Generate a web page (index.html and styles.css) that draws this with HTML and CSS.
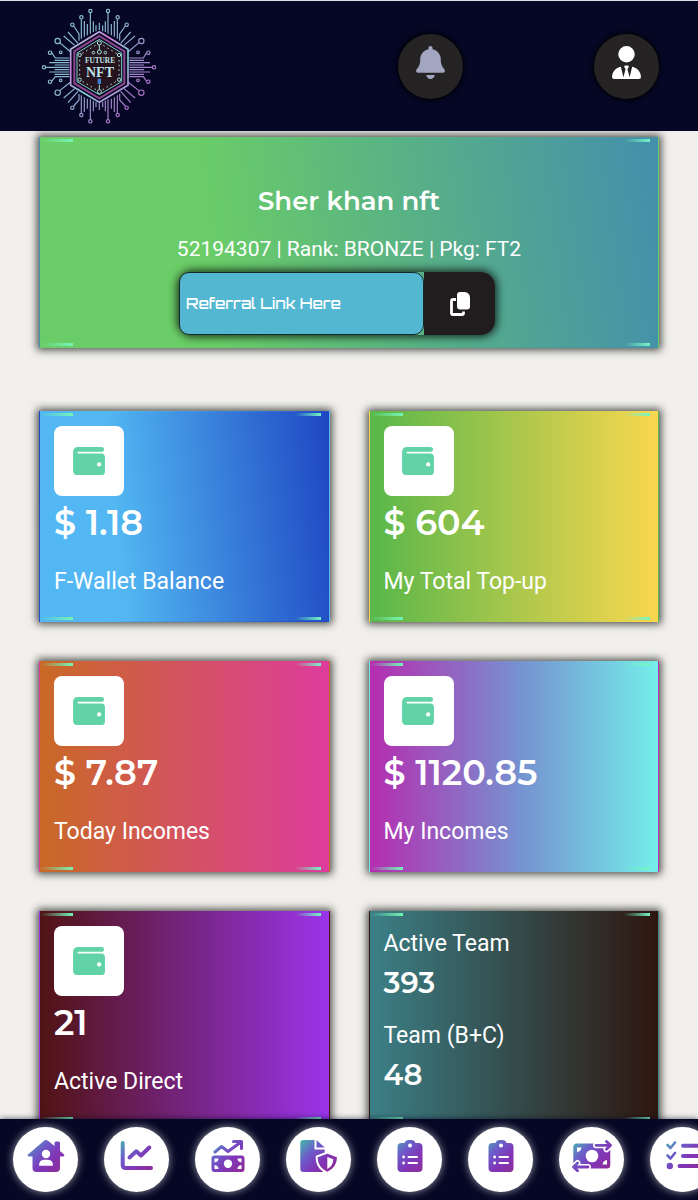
FILE: index.html
```
<!DOCTYPE html>
<html lang="en">
<head>
    <meta charset="UTF-8">
    <meta name="viewport" content="width=device-width, initial-scale=1.0">
    <title>Future NFT - Dashboard</title>
    <link rel="stylesheet" href="styles.css">
</head>
<body>
    <!-- Shared icon shapes -->
    <svg class="defs" width="0" height="0" aria-hidden="true">
        <defs>
            <linearGradient id="navGrad" gradientUnits="userSpaceOnUse" x1="2" y1="0" x2="34" y2="32">
                <stop offset="0" stop-color="#45b8b0"/>
                <stop offset="0.35" stop-color="#6d5bc8"/>
                <stop offset="0.65" stop-color="#8036b8"/>
                <stop offset="1" stop-color="#8f2c96"/>
            </linearGradient>
            <linearGradient id="logoGrad" gradientUnits="userSpaceOnUse" x1="60" y1="80" x2="350" y2="330">
                <stop offset="0" stop-color="#86c4d2"/>
                <stop offset="0.5" stop-color="#8fb0d0"/>
                <stop offset="1" stop-color="#b45cc4"/>
            </linearGradient>
            <linearGradient id="hexGrad" gradientUnits="userSpaceOnUse" x1="120" y1="100" x2="300" y2="310">
                <stop offset="0" stop-color="#8feae0"/>
                <stop offset="0.3" stop-color="#d67be0"/>
                <stop offset="0.6" stop-color="#7fd0d8"/>
                <stop offset="1" stop-color="#d06fe0"/>
            </linearGradient>
            <symbol id="wallet" viewBox="0 0 34 30">
                <path d="M5 0h24q3 0 3 2.500t-3 2.500H5.500q-1 0-1 .8t1 .8H29q4 0 4 4V25q0 4-4 4H5q-4.500 0-5-4V5q.3-5 5-5z"/>
                <circle cx="27" cy="18" r="2.200" fill="#fff"/>
            </symbol>
            <symbol id="clipboard" viewBox="0 0 40 32">
                <path d="M11.500 3h3q1-3 4-3h3q3 0 4 3h3q4 0 4 4v21q0 4-4 4h-17q-4 0-4-4V7q0-4 4-4z"/>
                <g fill="#fff">
                    <circle cx="20" cy="5.500" r="2"/>
                    <circle cx="13.600" cy="17" r="1.400"/>
                    <circle cx="13.600" cy="23" r="1.400"/>
                    <rect x="17.500" y="16" width="10.500" height="2" rx="1"/>
                    <rect x="17.500" y="22" width="10.500" height="2" rx="1"/>
                </g>
            </symbol>
        </defs>
    </svg>

    <header class="topbar">
        <a class="logo" href="#" aria-label="Future NFT">
            <svg viewBox="27 20 360 360" width="120" height="120">
                <g fill="none" stroke="url(#logoGrad)" stroke-width="3.500">
                    <!-- top and bottom traces -->
                    <path d="M181 41V103M154 60V118M234 41V103M262 60V118M163 65V112M172 74V108M190 66V98M198 78V96M208 70V92M218 78V96M226 66V98M244 74V108M253 65V112"/>
                    <path d="M181 360V300M154 341V288M234 360V300M262 341V288M163 338V294M172 328V298M190 336V304M198 324V308M208 332V312M218 324V308M226 336V304M244 328V298M253 338V294"/>
                    <!-- left and right traces -->
                    <path d="M48 204H118M65 160L76 176H118M65 246L76 232H118M58 190H118M58 218H118M74 183H118M74 197H118M74 211H118M74 225H118"/>
                    <path d="M367 204H298M350 160L340 176H298M350 246L340 232H298M360 190H298M360 218H298M342 183H298M342 197H298M342 211H298M342 225H298"/>
                    <!-- diagonal traces -->
                    <path d="M131 80L147 104V124M101 110L134 138M114 98L144 132M89 130L122 158M286 80L269 104V124M315 110L282 138M302 98L272 132M327 130L294 158"/>
                    <path d="M131 320L147 302V284M101 296L134 268M114 310L144 276M89 274L122 248M286 320L269 302V284M315 296L282 268M302 310L272 276M327 274L294 248"/>
                    <g>
                        <circle cx="181" cy="35" r="5"/><circle cx="234" cy="35" r="5"/>
                        <circle cx="154" cy="54" r="5"/><circle cx="263" cy="54" r="5"/>
                        <circle cx="127" cy="76" r="5"/><circle cx="290" cy="76" r="5"/>
                        <circle cx="83" cy="125" r="8"/><circle cx="334" cy="125" r="8"/>
                        <circle cx="60" cy="160" r="5"/><circle cx="355" cy="160" r="5"/>
                        <circle cx="92" cy="159" r="4"/><circle cx="324" cy="159" r="4"/>
                        <circle cx="42" cy="204" r="5"/><circle cx="372" cy="204" r="5"/>
                        <circle cx="60" cy="247" r="5"/><circle cx="355" cy="247" r="5"/>
                        <circle cx="92" cy="243" r="4"/><circle cx="324" cy="243" r="4"/>
                        <circle cx="83" cy="280" r="8"/><circle cx="334" cy="280" r="8"/>
                        <circle cx="127" cy="325" r="5"/><circle cx="290" cy="325" r="5"/>
                        <circle cx="154" cy="347" r="5"/><circle cx="263" cy="347" r="5"/>
                        <circle cx="181" cy="366" r="5"/><circle cx="234" cy="366" r="5"/>
                    </g>
                </g>
                <path d="M208 97L294 150V258L208 309L122 258V150Z" fill="#0b0a1c" stroke="url(#hexGrad)" stroke-width="5"/>
                <path d="M208 110L283 156V252L208 297L133 252V156Z" fill="none" stroke="#8d4696" stroke-width="6"/>
                <path d="M208 120L275 161V247L208 286L141 247V161Z" fill="#25131d" stroke="#78cfd0" stroke-width="3"/>
                <path d="M208 131L267 167V241L208 277L149 241V167Z" fill="none" stroke="#9fdce0" stroke-width="3" stroke-dasharray="5 9"/>
                <g fill="#25131d" stroke="#a5e2e4" stroke-width="3">
                    <circle cx="208" cy="131" r="6"/><circle cx="149" cy="167" r="5"/><circle cx="267" cy="167" r="5"/>
                    <circle cx="149" cy="241" r="5"/><circle cx="267" cy="241" r="5"/><circle cx="208" cy="277" r="6"/>
                    <circle cx="208" cy="158" r="6"/><circle cx="190" cy="160" r="4"/><circle cx="226" cy="160" r="4"/>
                </g>
                <path d="M208 137V152M208 256V270" stroke="#a5e2e4" stroke-width="3"/>
                <path d="M203 238h10v16h-10z" fill="#3d7fd0"/>
                <text class="logo-text" x="210" y="192" font-size="22" text-anchor="middle">FUTURE</text>
                <text class="logo-text" x="210" y="233" font-size="42" text-anchor="middle">NFT</text>
            </svg>
        </a>
        <div class="topbar-actions">
            <button class="round-btn" type="button" aria-label="Notifications">
                <svg viewBox="0 0 448 512" width="29" height="33" fill="#a3a6c0"><path d="M224 0c-17.700 0-32 14.300-32 32V51.200C119 66 64 130.600 64 208v18.800c0 47-17.300 92.400-48.500 127.600l-7.400 8.300c-8.400 9.400-10.400 22.900-5.300 34.400S19.400 416 32 416H416c12.600 0 24-7.400 29.200-18.900s3.100-25-5.300-34.400l-7.400-8.300C401.300 319.200 384 273.900 384 226.800V208c0-77.400-55-142-128-156.800V32c0-17.700-14.300-32-32-32zm45.300 493.300c12-12 18.700-28.300 18.700-45.300H160c0 17 6.700 33.300 18.700 45.300s28.300 18.700 45.300 18.700s33.300-6.700 45.300-18.700z"/></svg>
            </button>
            <button class="round-btn" type="button" aria-label="Profile">
                <svg viewBox="0 0 448 512" width="29" height="33" fill="#fff"><path d="M224 256A128 128 0 1 0 224 0a128 128 0 1 0 0 256zM209.100 359.200l-18.600-31c-6.400-10.700 1.300-24.200 13.700-24.200H243.700c12.400 0 20.100 13.600 13.700 24.200l-18.600 31 33.400 123.900 39.500-161.200c77.200 12 136.300 78.800 136.300 159.400c0 17-13.800 30.700-30.700 30.700H30.700C13.800 512 0 498.200 0 481.300c0-80.600 59.100-147.400 136.300-159.400l39.500 161.200 33.400-123.900z"/></svg>
            </button>
        </div>
    </header>

    <main class="content">
        <section class="card profile">
            <h1>Sher khan nft</h1>
            <p>52194307 | Rank: BRONZE | Pkg: FT2</p>
            <div class="referral">
                <input type="text" placeholder="Referral Link Here" aria-label="Referral link" readonly>
                <button type="button" aria-label="Copy referral link">
                    <svg viewBox="0 0 20 24" width="20" height="24">
                        <path d="M6 7.500H3Q1.500 7.500 1.500 9V21Q1.500 22.500 3 22.500H12Q13.500 22.500 13.500 21V19.500" fill="none" stroke="#fff" stroke-width="2.800"/>
                        <path d="M10 0h5q5 1 5 6v8.500q0 3-3 3h-7q-3 0-3-3V3q0-3 3-3z" fill="#fff"/>
                    </svg>
                </button>
            </div>
        </section>

        <div class="cards">
            <section class="card blue">
                <span class="card-icon"><svg width="33" height="29"><use href="#wallet"/></svg></span>
                <h2>$ 1.18</h2>
                <p>F-Wallet Balance</p>
            </section>
            <section class="card lime">
                <span class="card-icon"><svg width="33" height="29"><use href="#wallet"/></svg></span>
                <h2>$ 604</h2>
                <p>My Total Top-up</p>
            </section>
            <section class="card orange">
                <span class="card-icon"><svg width="33" height="29"><use href="#wallet"/></svg></span>
                <h2>$ 7.87</h2>
                <p>Today Incomes</p>
            </section>
            <section class="card aqua">
                <span class="card-icon"><svg width="33" height="29"><use href="#wallet"/></svg></span>
                <h2>$ 1120.85</h2>
                <p>My Incomes</p>
            </section>
            <section class="card violet">
                <span class="card-icon"><svg width="33" height="29"><use href="#wallet"/></svg></span>
                <h2>21</h2>
                <p>Active Direct</p>
            </section>
            <section class="card team">
                <p>Active Team</p>
                <h3>393</h3>
                <p>Team (B+C)</p>
                <h3>48</h3>
            </section>
        </div>
    </main>

    <nav class="bottom-nav">
        <a href="#" aria-label="Home">
            <svg viewBox="0 0 40 32" width="40" height="32">
                <path fill="url(#navGrad)" d="M18 .8q2-1.400 4 0L28.500 6V3q0-1.500 1.500-1.500h2.500q1.500 0 1.500 1.500V11L38 14.500q1 2-1 2H34V28q0 4-4 4H10.500q-4 0-4-4V16.500H3q-2.200-.2-1-2z"/>
                <circle cx="20" cy="14" r="4.200" fill="#fff"/>
                <path d="M13 25.700q0-6 5-6h4q5 0 5 6z" fill="#fff"/>
            </svg>
        </a>
        <a href="#" aria-label="Statistics">
            <svg viewBox="0 0 40 32" width="40" height="32" fill="none" stroke="url(#navGrad)" stroke-width="4" stroke-linecap="round" stroke-linejoin="round">
                <path d="M5.700 3V25q0 3 3 3H34"/>
                <path d="M12.500 17.500L19.300 11.300 24 15.500 32.300 7.500"/>
            </svg>
        </a>
        <a href="#" aria-label="Earnings">
            <svg viewBox="0 0 40 32" width="40" height="32">
                <path fill="none" stroke="url(#navGrad)" stroke-width="3" stroke-linecap="round" stroke-linejoin="round" d="M7 12L13.500 6.500 20 11.500 33 2M25.500 1.500H33.500V8.500"/>
                <rect x="3.500" y="15.500" width="33" height="16.500" rx="3" fill="url(#navGrad)"/>
                <circle cx="20" cy="23.700" r="4.200" fill="#fff"/>
                <path fill="#fff" d="M6.500 18.500h4q0 3.500-4 4zM33.500 18.500h-4q0 3.500 4 4zM6.500 29h4q0-3.500-4-4zM33.500 29h-4q0-3.500 4-4z"/>
            </svg>
        </a>
        <a href="#" aria-label="Policy">
            <svg viewBox="0 0 40 32" width="40" height="32">
                <path fill="url(#navGrad)" d="M4.500 0H15.500V9.500H25.700V29q0 3-3 3H4.500q-3.200 0-3.200-3V3q0-3 3.200-3zM17.500 0L25.700 7.500H17.500z"/>
                <path fill="url(#navGrad)" stroke="#fff" stroke-width="2" d="M28.300 12.500l10.500 4q1 11-10.500 16.500-11.500-5.500-10.500-16.500z"/>
                <path fill="#fff" d="M28.300 17l6 2.200q0 6.500-6 9.800z"/>
            </svg>
        </a>
        <a href="#" aria-label="Reports">
            <svg width="40" height="32" fill="url(#navGrad)"><use href="#clipboard"/></svg>
        </a>
        <a href="#" aria-label="History">
            <svg width="40" height="32" fill="url(#navGrad)"><use href="#clipboard"/></svg>
        </a>
        <a href="#" aria-label="Transfer">
            <svg viewBox="0 0 40 32" width="40" height="32">
                <rect x="1.300" y="3.500" width="37" height="25" rx="3.500" fill="url(#navGrad)"/>
                <circle cx="20" cy="16" r="6.300" fill="#fff"/>
                <path fill="#fff" d="M5 7.500h4.500q-.5 4-4.500 4.500zM35 24.500h-4.500q.5-4 4.500-4.500z"/>
                <g fill="none" stroke-linecap="round" stroke-linejoin="round">
                    <path stroke="#fff" stroke-width="6" d="M24 5.300H38M34.500 1.500L38.500 5.300 34.500 9.300M16 27H2M5.500 23L1.500 27 5.500 30.800"/>
                    <path stroke="url(#navGrad)" stroke-width="2.800" d="M24 5.300H38M34.500 1.500L38.500 5.300 34.500 9.300M16 27H2M5.500 23L1.500 27 5.500 30.800"/>
                </g>
            </svg>
        </a>
        <a href="#" aria-label="Tasks">
            <svg viewBox="0 0 40 32" width="40" height="32" fill="none" stroke="url(#navGrad)" stroke-linecap="round" stroke-linejoin="round">
                <path stroke-width="2.600" d="M4.500 5L7.500 8 12 2.500M4.500 15.500L7.500 18.500 12 13"/>
                <path stroke-width="4" d="M20 5.700L37 5.800M20 16L37 16.100M16.500 26L37 26.100"/>
                <circle cx="6.800" cy="26" r="3.200" fill="url(#navGrad)" stroke="none"/>
            </svg>
        </a>
    </nav>
</body>
</html>
```
FILE: styles.css
```
* {
    box-sizing: border-box;
}

body {
    display: flex;
    flex-direction: column;
    height: 100vh;
    margin: 0;
    background-color: #f1f0ec;
    color: #fff;
    font-family: Roboto, sans-serif;
    font-size: 23px;
    overflow: hidden;
}

h1, h2, h3, p {
    margin: 0;
}

h1, h2, h3 {
    font-family: Montserrat, Inter, sans-serif;
    font-weight: 600;
}

p {
    line-height: 32px;
}

.defs {
    position: absolute;
}

/* Header */
.topbar {
    display: flex;
    flex: none;
    align-items: center;
    justify-content: space-between;
    height: 131px;
    padding: 0 39px;
    border-top: 1px solid #d5e2ea;
    background-color: #050724;
}

.logo,
.logo svg {
    display: block;
}

.logo-text {
    font-family: "Liberation Serif", serif;
    font-weight: bold;
    fill: #bfe3ea;
}

.topbar-actions {
    display: flex;
    gap: 131px;
}

.round-btn {
    display: flex;
    justify-content: center;
    width: 65px;
    height: 65px;
    padding: 12px 0 0;
    border: none;
    border-radius: 50%;
    background-color: #252323;
    box-shadow: 0 0 4px 1px #000;
    cursor: pointer;
}

/* Cards */
.content {
    flex: 1;
    min-height: 0;
    padding: 6px 39px 20px;
    overflow-y: auto;
    scrollbar-width: none;
}

.cards {
    display: grid;
    grid-template-columns: 1fr 1fr;
    gap: 39px;
    margin-top: 63px;
}

.card {
    position: relative;
    padding: 14px 14px 23px;
    border: 1px solid transparent;
    box-shadow: 0 0 8px 2px rgba(0, 0, 0, 0.7);
}

/* glowing dashes in the corners */
.card::before {
    content: "";
    position: absolute;
    inset: 1px 8px 1px 0;
    background-image:
        linear-gradient(90deg, transparent, #73f5b5),
        linear-gradient(90deg, transparent, #73f5b5),
        linear-gradient(90deg, transparent, #73f5c5),
        linear-gradient(90deg, transparent, #73f5c5);
    background-position: left top, left bottom, right top, right bottom;
    background-repeat: no-repeat;
    background-size: 33px 3px, 33px 3px, 26px 3px, 26px 3px;
    pointer-events: none;
}

.card h2 {
    margin-bottom: 16px;
    font-size: 35px;
    line-height: 54px;
}

.card h3 {
    font-size: 29px;
    line-height: 46px;
}

.card-icon {
    display: flex;
    align-items: center;
    justify-content: center;
    width: 70px;
    height: 70px;
    border-radius: 8px;
    background-color: #fff;
    fill: #62d3a6;
}

.profile {
    display: flex;
    flex-direction: column;
    align-items: center;
    padding: 43px 14px 12px;
    background-image: linear-gradient(82deg, #6acd67 28%, #438fac);
}

.profile h1 {
    margin-bottom: 12px;
    font-size: 26px;
    line-height: 40px;
}

.profile p {
    margin-bottom: 7px;
    font-size: 21px;
}

.blue {
    background-image: linear-gradient(84deg, #52b7f2 28%, #1e46c2);
}

.lime {
    background-image: linear-gradient(90deg, #58b74a, #fad74e);
}

.orange {
    background-image: linear-gradient(90deg, #c96925, #de3c9c);
}

.aqua {
    background-image: linear-gradient(90deg, #b52db0, #7692d0 52%, #74eeea);
}

.violet {
    background-image: linear-gradient(90deg, #501313, #9b34ea);
}

.team {
    padding-top: 16px;
    background-image: linear-gradient(90deg, #3b8087, #2e160f);
}

.team h3 + p {
    margin-top: 14px;
}

/* Referral link */
.referral {
    display: flex;
    width: 316px;
    height: 63px;
    margin-right: 24px;
    border-radius: 14px;
    box-shadow: 0 0 8px 2px rgba(0, 0, 0, 0.75);
}

.referral input {
    flex: 1;
    min-width: 0;
    padding: 0 6px;
    border: 1px solid #15292c;
    border-radius: 10px;
    background-color: #54b7d2;
    color: #fff;
    font-family: Orbitron, "DejaVu Sans", sans-serif;
    font-size: 15px;
    font-weight: 500;
}

.referral input::placeholder {
    color: #fff;
    opacity: 1;
}

.referral button {
    display: flex;
    align-items: center;
    justify-content: center;
    width: 71px;
    border: none;
    border-radius: 0 14px 14px 0;
    background-color: #211c1e;
    cursor: pointer;
}

/* Bottom navigation */
.bottom-nav {
    position: relative;
    display: flex;
    flex: none;
    gap: 26px;
    height: 81px;
    padding: 8px 13px;
    background-color: #050724;
    box-shadow: 0 0 6px rgba(5, 7, 36, 0.7);
    overflow-x: auto;
    scrollbar-width: none;
}

.bottom-nav a {
    display: flex;
    flex: none;
    justify-content: center;
    width: 65px;
    height: 65px;
    padding-top: 13px;
    border-radius: 50%;
    background-color: #fff;
    box-shadow: 0 0 9px rgba(255, 255, 255, 0.6);
}
```
